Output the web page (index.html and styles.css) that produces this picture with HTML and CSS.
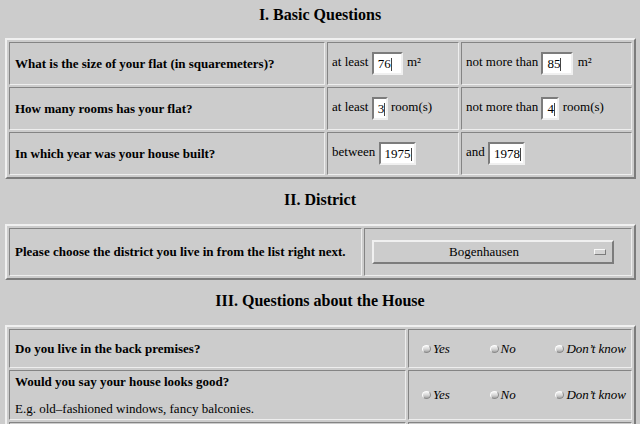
FILE: index.html
```html
<!DOCTYPE html>
<html>
<head>
<meta charset="utf-8">
<title>Questionnaire</title>
<link rel="stylesheet" href="styles.css">
</head>
<body>
<h2 class="sec sec-first">I. Basic Questions</h2>
<table class="qt">
  <tr class="row-43">
    <td class="q w316">What is the size of your flat (in squaremeters)?</td>
    <td class="w132">at least <span class="field fw31">76<i class="caret"></i></span> <span class="unit">m²</span></td>
    <td class="w171">not more than <span class="field fw32">85<i class="caret"></i></span> <span class="unit">m²</span></td>
  </tr>
  <tr class="row-43">
    <td class="q">How many rooms has your flat?</td>
    <td>at least <span class="field fw16">3<i class="caret"></i></span> room(s)</td>
    <td>not more than <span class="field fw18">4<i class="caret"></i></span> room(s)</td>
  </tr>
  <tr class="row-43">
    <td class="q">In which year was your house built?</td>
    <td>between <span class="field fw37">1975<i class="caret"></i></span></td>
    <td>and <span class="field fw37">1978<i class="caret"></i></span></td>
  </tr>
</table>

<h2 class="sec sec-next">II. District</h2>
<table class="qt">
  <tr class="row-48">
    <td class="q w353">Please choose the district you live in from the list right next.</td>
    <td class="w268 sel-cell">
      <div class="select"><span class="select-label">Bogenhausen</span><span class="select-ind"></span></div>
    </td>
  </tr>
</table>

<h2 class="sec sec-next">III. Questions about the House</h2>
<table class="qt">
  <tr class="row-39">
    <td class="q w397">Do you live in the back premises?</td>
    <td class="w224 opt-cell">
      <div class="opts">
        <span class="opt"><span class="radio"></span>Yes</span>
        <span class="opt"><span class="radio"></span>No</span>
        <span class="opt"><span class="radio"></span>Don’t know</span>
      </div>
    </td>
  </tr>
  <tr class="row-50">
    <td class="q">
      <div class="q-line">Would you say your house looks good?</div>
      <div class="q-note">E.g. old–fashioned windows, fancy balconies.</div>
    </td>
    <td class="opt-cell">
      <div class="opts">
        <span class="opt"><span class="radio"></span>Yes</span>
        <span class="opt"><span class="radio"></span>No</span>
        <span class="opt"><span class="radio"></span>Don’t know</span>
      </div>
    </td>
  </tr>
  <tr class="row-50">
    <td class="q">&nbsp;</td>
    <td class="opt-cell">&nbsp;</td>
  </tr>
</table>
</body>
</html>
```

FILE: styles.css
```css
html, body {
  margin: 0;
  padding: 0;
}

body {
  background: #cccccc;
  color: #000;
  font-family: "Liberation Serif", "Times New Roman", serif;
  font-size: 13px;
  width: 640px;
  height: 424px;
  overflow: hidden;
}

.sec {
  margin: 0;
  font-size: 16px;
  line-height: 20px;
  font-weight: bold;
  text-align: center;
}

.sec-first {
  margin-top: 5px;
  margin-bottom: 13px;
}

.sec-next {
  margin-top: 11px;
  margin-bottom: 14px;
}

.qt {
  margin-left: 5px;
  width: 631px;
  table-layout: fixed;
  border-collapse: separate;
  border-spacing: 2px;
  border: 2px solid;
  border-color: #f0f0f0 #7c7c7c #7c7c7c #f0f0f0;
}

.qt td {
  box-sizing: border-box;
  border: 1px solid;
  border-color: #848484 #eeeeee #eeeeee #848484;
  padding: 0 4px 0 5px;
  vertical-align: middle;
  white-space: nowrap;
  line-height: 16px;
}

.qt td.q {
  font-weight: bold;
}

.w316 { width: 316px; }
.w132 { width: 132px; }
.w171 { width: 171px; }
.w353 { width: 353px; }
.w268 { width: 268px; }
.w397 { width: 397px; }
.w224 { width: 224px; }

.row-43 td { height: 43px; }
.row-48 td { height: 48px; }
.row-39 td { height: 39px; }
.row-50 td { height: 50px; }

.qt td:not(.q) {
  padding-left: 4px;
}

.field {
  display: inline-block;
  box-sizing: border-box;
  height: 23px;
  border: 2px solid;
  border-color: #7c7c7c #f0f0f0 #f0f0f0 #7c7c7c;
  background: #ffffff;
  padding: 0 0 0 4px;
  line-height: 19px;
  vertical-align: middle;
  white-space: nowrap;
  overflow: hidden;
}

.fw31 { width: 31px; }
.fw32 { width: 32px; }
.fw16 { width: 16px; }
.fw18 { width: 18px; }
.fw37 { width: 37px; }

.caret {
  display: inline-block;
  width: 1px;
  height: 13px;
  margin-left: 0;
  background: #444;
  vertical-align: -3px;
}

.unit {
  margin-left: 1px;
}

.qt td.sel-cell {
  padding: 0 7px;
}

.select {
  display: flex;
  align-items: center;
  box-sizing: border-box;
  width: 242px;
  height: 24px;
  border: 2px solid;
  border-color: #f0f0f0 #7c7c7c #7c7c7c #f0f0f0;
}

.select-label {
  flex: 1;
  text-align: center;
  font-weight: normal;
}

.select-ind {
  box-sizing: border-box;
  width: 12px;
  height: 6px;
  margin-right: 6px;
  border: 1px solid;
  border-color: #f8f8f8 #7c7c7c #7c7c7c #f8f8f8;
  background: #d4d4d4;
}

.qt td.opt-cell {
  padding: 0 5px 0 13px;
}

.opts {
  display: flex;
  justify-content: space-between;
  align-items: center;
  font-style: italic;
}

.opt {
  display: flex;
  align-items: center;
  gap: 2px;
}

.radio {
  display: inline-block;
  box-sizing: border-box;
  width: 9px;
  height: 8px;
  border-radius: 50%;
  border: 1px solid;
  border-color: #fdfdfd #8a8a8a #8a8a8a #fdfdfd;
  background: linear-gradient(#f4f4f4 0%, #d8d8d8 50%, #a4a4a4 100%);
}

.q-line {
  font-weight: bold;
}

.q-note {
  margin-top: 11px;
  font-weight: normal;
}
```
